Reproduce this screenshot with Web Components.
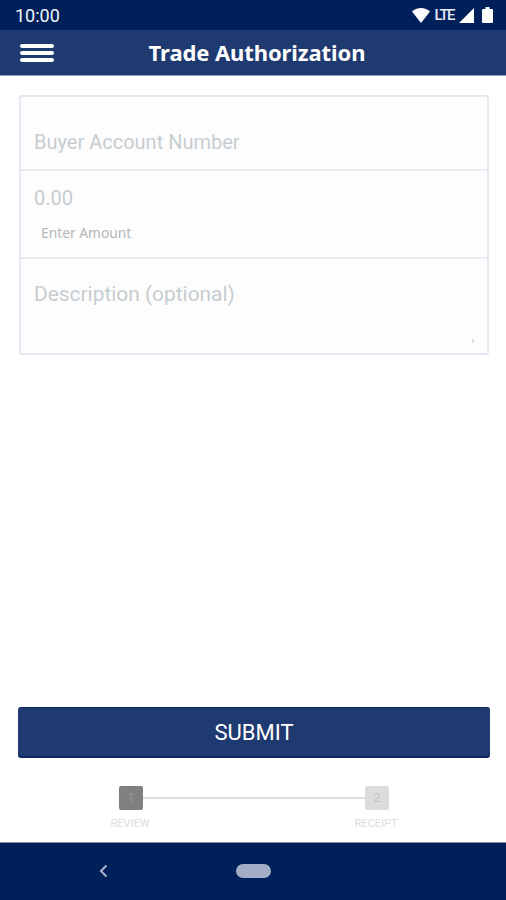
<!DOCTYPE html>
<html>
<head>
<meta charset="utf-8">
<title>Trade Authorization</title>
<style>
  body { margin: 0; background: #fff; font-family: Roboto, "Liberation Sans", sans-serif; }
</style>
</head>
<body>
<app-screen>
  <status-bar slot="top" time="10:00"></status-bar>
  <app-bar slot="top" title="Trade Authorization"></app-bar>
  <form-card>
    <form-row height="74" pad="32"><span class="ph">Buyer Account Number</span></form-row>
    <form-row height="88" pad="14" hint="Enter Amount"><span class="ph">0.00</span></form-row>
    <form-row height="94" pad="22" size="20.900" grip last><span class="ph">Description (optional)</span></form-row>
  </form-card>
  <submit-button slot="bottom">SUBMIT</submit-button>
  <step-track slot="bottom"></step-track>
  <nav-bar slot="bottom"></nav-bar>
</app-screen>

<script>
class AppScreen extends HTMLElement {
    constructor(){
        super();
        this.attachShadow({mode:"open"}).innerHTML = `
        <style>
        :host { display: flex; flex-direction: column; height: 900px; overflow: hidden; }
        main { flex: 1; padding: 19px 17px 0 19px; }
        </style>
        <slot name="top"></slot>
        <main><slot></slot></main>
        <slot name="bottom"></slot>
        `;
    }
}

class StatusBar extends HTMLElement {
    constructor(){
        super();
        this.attachShadow({mode:"open"}).innerHTML = `
        <style>
        :host { display: flex; align-items: center; justify-content: space-between; height: 30px; padding: 0 13px 0 15px; background: #00205b; color: #fff; }
        .time { font: 400 18px Roboto, sans-serif; color: #f2f4f8; }
        .icons { display: flex; align-items: center; }
        .lte { font: 500 15px Roboto, sans-serif; letter-spacing: -1.500px; margin: 0 5px 0 5px; color: #e6eaf2; }
        svg { display: block; }
        </style>
        <span class="time">${this.getAttribute("time")}</span>
        <div class="icons">
            <svg width="18" height="15" viewBox="0 0 19 15" preserveAspectRatio="none"><path d="M0 3.500C2.500 1.300 5.800 0 9.500 0s7 1.300 9.500 3.500L9.500 15z" fill="#fff"/></svg>
            <span class="lte">LTE</span>
            <svg width="15" height="15" viewBox="0 0 15 15"><path d="M15 0v15H0z" fill="#fff"/></svg>
            <svg width="11" height="16" viewBox="0 0 11 16" style="margin-left:8px"><path d="M3.500 0h4v2H10a1 1 0 0 1 1 1v12a1 1 0 0 1-1 1H1a1 1 0 0 1-1-1V3a1 1 0 0 1 1-1h2.500z" fill="#fff"/></svg>
        </div>
        `;
    }
}

class AppBar extends HTMLElement {
    constructor(){
        super();
        this.attachShadow({mode:"open"}).innerHTML = `
        <style>
        :host { display: flex; align-items: center; position: relative; height: 46px; background: #1f3a70; color: #fff; box-shadow: inset 0 -1px 0 #8d9dbd; }
        .menu { display: flex; flex-direction: column; gap: 3px; margin-left: 20px; }
        .menu i { display: block; width: 34px; height: 4px; border-radius: 2px; background: #fff; }
        h1 { flex: 1; margin: -2px 0 0 -46px; text-align: center; font: 700 22px "Noto Sans", sans-serif; letter-spacing: -0.1px; }
        </style>
        <div class="menu"><i></i><i></i><i></i></div>
        <h1>${this.getAttribute("title")}</h1>
        `;
    }
}

class FormCard extends HTMLElement {
    constructor(){
        super();
        this.attachShadow({mode:"open"}).innerHTML = `
        <style>
        :host { display: block; box-sizing: border-box; width: 470px; height: 260px; border: 2px solid #e4e8f1; border-radius: 3px; background: #fdfdfd; }
        </style>
        <slot></slot>
        `;
    }
}

class FormRow extends HTMLElement {
    constructor(){
        super();
        const hint = this.getAttribute("hint");
        const size = this.getAttribute("size") || "20";
        this.attachShadow({mode:"open"}).innerHTML = `
        <style>
        :host { display: block; position: relative; box-sizing: border-box; height: ${this.getAttribute("height")}px; padding: ${this.getAttribute("pad")}px 13px 0; border-bottom: 2px solid #e9ecf3; color: #c6cdd1; font: 400 ${size}px/26px Roboto, sans-serif; }
        :host([last]) { border-bottom: 0; }
        .hint { margin: 13px 0 0 7px; font: 400 13.800px/18px "Noto Sans", sans-serif; color: #b4b8bb; }
        .grip { position: absolute; right: 13px; bottom: 10px; width: 2px; height: 4px; background: #dfe2e6; }
        </style>
        <slot></slot>
        ${hint ? `<div class="hint">${hint}</div>` : ""}
        ${this.hasAttribute("grip") ? `<div class="grip"></div>` : ""}
        `;
    }
}

class SubmitButton extends HTMLElement {
    constructor(){
        super();
        this.attachShadow({mode:"open"}).innerHTML = `
        <style>
        :host { display: block; margin: 0 16px 0 18px; }
        button { display: block; box-sizing: border-box; width: 100%; height: 51px; border: 0; border-radius: 3px; border-top: 1px solid #0f2a63; border-bottom: 2px solid #0b2462; background: #1f3a70; color: #fff; font: 400 22px Roboto, sans-serif; padding: 0; }
        </style>
        <button type="button"><slot></slot></button>
        `;
    }
}

class StepTrack extends HTMLElement {
    constructor(){
        super();
        this.attachShadow({mode:"open"}).innerHTML = `
        <style>
        :host { display: block; padding: 28px 0 12px; }
        .track { display: flex; justify-content: center; padding-left: 2px; }
        .step { position: relative; width: 24px; height: 44px; }
        .num { display: flex; align-items: center; justify-content: center; height: 24px; border-radius: 2px; font: 400 12px Roboto, sans-serif; }
        .on .num { background: #808080; color: #9a9a9a; }
        .off .num { background: #dcdcdc; color: #c4c4c4; }
        .name { position: absolute; top: 31px; left: calc(50% - 1px); transform: translateX(-50%); font: 400 11px/14px Roboto, sans-serif; color: #dcdcdc; }
        .line { width: 222px; height: 2px; margin-top: 11px; background: #dcdcdc; }
        </style>
        <div class="track">
            <div class="step on"><div class="num">1</div><div class="name">REVIEW</div></div>
            <div class="line"></div>
            <div class="step off"><div class="num">2</div><div class="name">RECEIPT</div></div>
        </div>
        `;
    }
}

class NavBar extends HTMLElement {
    constructor(){
        super();
        this.attachShadow({mode:"open"}).innerHTML = `
        <style>
        :host { display: block; position: relative; height: 58px; background: #00205b; box-shadow: inset 0 1px 0 #8d8aa5; }
        svg { position: absolute; left: 99px; top: 22px; }
        .home { position: absolute; left: 236px; top: 22px; width: 35px; height: 14px; border-radius: 7px; background: #a3aec6; }
        </style>
        <svg width="9" height="14" viewBox="0 0 9 14"><path d="M7.500 1.500L2 7l5.500 5.500" fill="none" stroke="#a3aec6" stroke-width="2.200"/></svg>
        <div class="home"></div>
        `;
    }
}

customElements.define("app-screen", AppScreen);
customElements.define("status-bar", StatusBar);
customElements.define("app-bar", AppBar);
customElements.define("form-card", FormCard);
customElements.define("form-row", FormRow);
customElements.define("submit-button", SubmitButton);
customElements.define("step-track", StepTrack);
customElements.define("nav-bar", NavBar);
</script>
</body>
</html>
